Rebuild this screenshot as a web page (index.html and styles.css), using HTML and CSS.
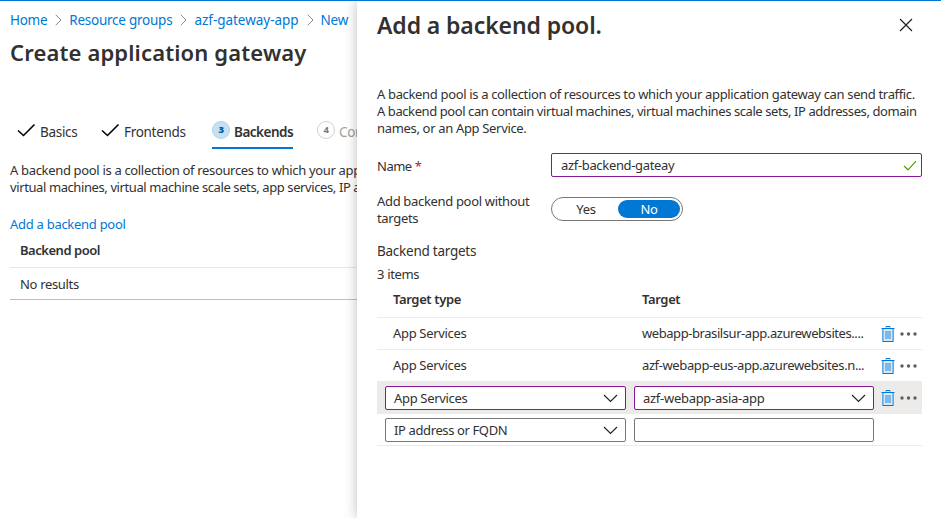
FILE: index.html
```html
<!DOCTYPE html>
<html lang="en">
<head>
<meta charset="utf-8">
<title>Create application gateway</title>
<link rel="stylesheet" href="styles.css">
</head>
<body>
<svg class="defs" aria-hidden="true">
  <symbol id="trash" viewBox="0 0 14 18">
    <path d="M5 2.5V1.5H9V2.5" fill="none" stroke="#0078d4"/>
    <rect x="2" y="3" width="10" height="13" fill="#83bdeb"/>
    <rect x="3" y="4" width="8" height="12" fill="#d5e9f8"/>
    <rect x="4" y="6" width="6" height="8" fill="#7db8e8"/>
    <path d="M1.5 4V16M12.5 4V16" stroke="#62abe5"/>
    <path d="M.5 3.5H13.5M1.5 16.5H12.5" stroke="#0078d4"/>
  </symbol>
  <symbol id="check" viewBox="0 0 19 14"><path d="M1 7.5L6.5 12.5L17.5 1.5" fill="none" stroke="currentColor" stroke-width="1.6"/></symbol>
  <symbol id="chevron" viewBox="0 0 15 9"><path d="M1 1L7.5 7.5L14 1" fill="none" stroke="#252423" stroke-width="1.2"/></symbol>
  <symbol id="crumb" viewBox="0 0 7 12"><path d="M.7 .8L6 6L.7 11.2" fill="none" stroke="#8a8886"/></symbol>
  <symbol id="dots" viewBox="0 0 17 4"><g fill="#605e5c"><circle cx="2" cy="2" r="1.7"/><circle cx="8.5" cy="2" r="1.7"/><circle cx="15" cy="2" r="1.7"/></g></symbol>
</svg>
<div class="portal">
  <main class="blade">
    <nav class="crumbs">
      <a class="c-home">Home</a><svg><use href="#crumb"/></svg>
      <a class="c-groups">Resource groups</a><svg><use href="#crumb"/></svg>
      <a class="c-app">azf-gateway-app</a><svg><use href="#crumb"/></svg>
      <a class="c-new">New</a>
    </nav>
    <h1 class="blade-title">Create application gateway</h1>
    <div class="tabs">
      <div class="tab t-basics"><svg class="check"><use href="#check"/></svg><span>Basics</span></div>
      <div class="tab t-front"><svg class="check"><use href="#check"/></svg><span>Frontends</span></div>
      <div class="tab t-back active"><b class="step">3</b><span>Backends</span></div>
      <div class="tab t-conf disabled"><b class="step">4</b><span>Configuration</span></div>
    </div>
    <p class="intro"><span class="i1">A backend pool is a collection of resources to which your application</span><br><span class="i2">virtual machines, virtual machine scale sets, app services, IP addresses</span></p>
    <a class="add-link">Add a backend pool</a>
    <div class="pool-head"><span>Backend pool</span></div>
    <div class="pool-empty"><span>No results</span></div>
  </main>
  <aside class="panel">
    <header class="panel-head">
      <h2>Add a backend pool.</h2>
      <svg class="close" viewBox="0 0 14 14"><path d="M1 1L13 13M13 1L1 13" stroke="#201f1e" stroke-width="1.15"/></svg>
    </header>
    <p class="desc"><span class="d1">A backend pool is a collection of resources to which your application gateway can send traffic.</span><br><span class="d2">A backend pool can contain virtual machines, virtual machines scale sets, IP addresses, domain</span><br><span class="d3">names, or an App Service.</span></p>
    <div class="field name-field">
      <label><span class="name-label">Name</span> <i class="req">*</i></label>
      <div class="box valid name-box"><span class="name-value">azf-backend-gateay</span><svg class="ok" viewBox="0 0 14 11"><path d="M1 6L5 9.8L13 1.2" fill="none" stroke="#57a300" stroke-width="1.2"/></svg></div>
    </div>
    <div class="field toggle-field">
      <label><span class="tl">Add backend pool without</span><br><span class="tl2">targets</span></label>
      <div class="toggle"><span>Yes</span><span class="on">No</span></div>
    </div>
    <div class="targets-title"><span>Backend targets</span></div>
    <div class="count"><span>3 items</span></div>
    <div class="grid">
      <div class="row head"><b class="type"><span class="h-type">Target type</span></b><b class="target"><span class="h-target">Target</span></b></div>
      <div class="row">
        <span class="type"><span class="app">App Services</span></span><span class="target"><span class="web1">webapp-brasilsur-app.azurewebsites....</span></span>
        <svg class="trash"><use href="#trash"/></svg><svg class="dots"><use href="#dots"/></svg>
      </div>
      <div class="row">
        <span class="type"><span class="app">App Services</span></span><span class="target"><span class="web2">azf-webapp-eus-app.azurewebsites.n...</span></span>
        <svg class="trash"><use href="#trash"/></svg><svg class="dots"><use href="#dots"/></svg>
      </div>
      <div class="row edit selected">
        <div class="box valid b-type"><span class="app">App Services</span><svg class="chev"><use href="#chevron"/></svg></div>
        <div class="box valid b-target"><span class="web3">azf-webapp-asia-app</span><svg class="chev"><use href="#chevron"/></svg></div>
        <svg class="trash"><use href="#trash"/></svg><svg class="dots"><use href="#dots"/></svg>
      </div>
      <div class="row edit">
        <div class="box b-type"><span class="ip">IP address or FQDN</span><svg class="chev"><use href="#chevron"/></svg></div>
        <div class="box b-target"></div>
      </div>
    </div>
  </aside>
</div>
</body>
</html>
```
FILE: styles.css
```css
* { box-sizing: border-box; }
body { margin: 0; font: 13px/17px "Noto Sans", sans-serif; letter-spacing: -.33px; color: #323130; background: #fff; overflow: hidden; }
h1, h2, p { margin: 0; }
svg { display: block; flex: none; }
.defs { display: none; }
.portal { display: flex; height: 518px; border-top: 1px solid #0078d4; }
.blade { width: 357px; flex: none; overflow: hidden; padding-left: 10px; white-space: nowrap; }
.panel { position: relative; width: 584px; flex: none; background: #fff; padding: 0 19px 0 20px; box-shadow: 0 0 12px rgba(0,0,0,.26); clip-path: inset(0 0 0 -20px); white-space: nowrap; }
.crumbs { display: flex; align-items: center; height: 38px; color: #0078d4; font-size: 13.5px; letter-spacing: -.24px; }
.crumbs svg { width: 7px; height: 12px; margin: 0 7px 0 8px; }
.c-home { letter-spacing: -.3px; }
.c-app { letter-spacing: -.03px; }
.blade-title { font-size: 22px; line-height: 30px; font-weight: 600; margin-top: -2px; letter-spacing: .14px; }
.tabs { display: flex; height: 32px; margin-top: 50px; font-size: 13.5px; letter-spacing: -.3px; }
.tab { display: flex; flex: none; height: 32px; padding-top: 6px; }
.tab span { line-height: 18px; }
.check { width: 19px; height: 14px; margin: 0 4px 0 0; color: #000; }
.t-basics { margin-left: 7px; width: 84px; }
.t-front { width: 111px; }
.t-back { width: 81px; border-bottom: 2px solid #0078d4; font-weight: 600; letter-spacing: -.5px; }
.t-conf { margin-left: 24px; }
.disabled { color: #a19f9d; }
.step { width: 18px; height: 18px; margin: -2px 4px 0 0; flex: none; border: 1px solid #a9d3f2; border-radius: 50%; background: #c7e0f4; color: #005a9e; font-size: 9.5px; line-height: 16px; text-align: center; }
.disabled .step { background: #fff; border-color: #d2d0ce; color: #797775; }
.intro { margin-top: 13px; }
.i2 { letter-spacing: -.4px; }
.add-link { display: block; margin-top: 20px; color: #0078d4; letter-spacing: -.28px; }
.pool-head { height: 35px; padding: 9px 10px 0; font-weight: 600; letter-spacing: -.47px; border-bottom: 1px solid #e8e6e4; }
.pool-empty { height: 32px; padding: 8px 10px 0; border-bottom: 1px solid #bebebe; }
.panel-head { display: flex; justify-content: space-between; height: 85px; padding-top: 9px; }
.panel-head h2 { font-size: 23px; line-height: 31px; font-weight: 600; letter-spacing: -.1px; }
.close { width: 14px; height: 14px; margin: 8px 9px 0 0; }
.d1 { letter-spacing: -.34px; }
.d2 { letter-spacing: -.42px; }
.field { display: flex; }
.field label { width: 174px; flex: none; }
.name-field { margin-top: 16px; height: 24px; }
.name-field label { padding-top: 5px; }
.req { color: #a4262c; font-style: normal; }
.name-label { letter-spacing: -.5px; }
.name-value { letter-spacing: -.33px; }
.box { display: flex; align-items: center; justify-content: space-between; height: 24px; padding: 1px 7px 0 8px; background: #fff; border: 1px solid #7a7876; border-radius: 2px; }
.valid { border-color: #881798; }
.name-box { width: 371px; padding: 0 4px 0 9px; }
.ok { width: 14px; height: 11px; }
.toggle-field { margin-top: 16px; height: 41px; }
.toggle { display: flex; align-items: center; margin-top: 4px; width: 132px; height: 24px; padding: 2px; border: 1px solid #797775; border-radius: 12px; text-align: center; line-height: 18px; }
.toggle span { width: 64px; }
.toggle .on { width: 62px; background: #0078d4; color: #fff; border-radius: 9px; }
.targets-title { margin-top: 9px; font-size: 13.5px; letter-spacing: -.25px; }
.count { margin-top: 6px; }
.grid { margin-top: -1px; }
.row { display: flex; align-items: center; height: 32px; border-bottom: 1px solid #edebe9; }
.head { height: 36px; font-weight: 600; letter-spacing: -.37px; }
.row .type { width: 249px; margin-left: 16px; flex: none; font-weight: inherit; }
.row .target { width: 238px; flex: none; font-weight: inherit; }
.trash { width: 14px; height: 18px; margin: 1px 0 0 1px; }
.dots { width: 17px; height: 4px; margin-left: 5px; }
.selected { background: #edebe9; }
.b-type { width: 241px; margin-left: 8px; }
.b-target { width: 240px; margin-left: 8px; }
.selected .trash { margin-left: 7px; }
.chev { width: 15px; height: 9px; }
.web1 { letter-spacing: -.43px; }
.web2 { letter-spacing: -.39px; }
.web3 { letter-spacing: -.28px; }
.ip { letter-spacing: -.38px; }
```
